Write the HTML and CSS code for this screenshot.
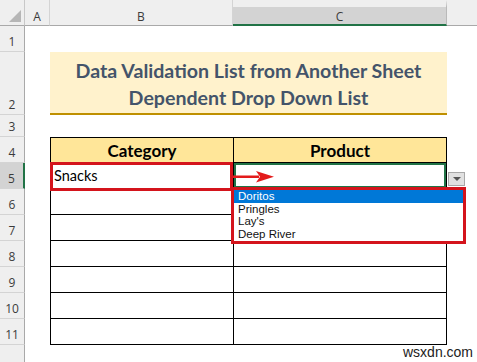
FILE: index.html
```html
<!DOCTYPE html>
<html lang="en">
<head>
    <meta charset="UTF-8">
    <meta name="viewport" content="width=device-width, initial-scale=1.0">
    <title>Dependent Drop Down List</title>
    <link rel="stylesheet" href="styles.css">
</head>
<body>
    <div class="sheet">
        <div class="corner"><span class="tri"></span></div>
        <div class="col-head">A</div>
        <div class="col-head">B</div>
        <div class="col-head sel">C</div>
        <div class="col-head rest"></div>

        <div class="row-head r1">1</div>
        <div class="row-head r2">2</div>
        <div class="row-head r3">3</div>
        <div class="row-head r4">4</div>
        <div class="row-head r5 sel">5</div>
        <div class="row-head r6">6</div>
        <div class="row-head r7">7</div>
        <div class="row-head r8">8</div>
        <div class="row-head r9">9</div>
        <div class="row-head r10">10</div>
        <div class="row-head r11">11</div>
        <div class="row-head r12"></div>

        <div class="title">
            <p>Data Validation List from Another Sheet</p>
            <p>Dependent Drop Down List</p>
        </div>

        <div class="data-table">
            <div class="th">Category</div>
            <div class="th">Product</div>
            <div class="td">Snacks</div>
            <div class="td active"></div>
            <div class="td"></div><div class="td"></div>
            <div class="td"></div><div class="td"></div>
            <div class="td"></div><div class="td"></div>
            <div class="td"></div><div class="td"></div>
            <div class="td"></div><div class="td"></div>
            <div class="td"></div><div class="td"></div>
        </div>

        <!-- annotations over the sheet -->
        <div class="mark-snacks"></div>
        <svg class="arrow" width="42" height="16" viewBox="0 0 42 16">
            <rect x="0" y="6.5" width="26" height="2.5" fill="#e31b1b"/>
            <polygon points="23,2 41,7.7 23,13.5 27,7.7" fill="#e31b1b"/>
        </svg>
        <div class="dd-btn"><span class="caret"></span></div>
        <ul class="dd-list">
            <li class="on">Doritos</li>
            <li>Pringles</li>
            <li>Lay's</li>
            <li>Deep River</li>
        </ul>
        <div class="watermark">wsxdn.com</div>
    </div>
</body>
</html>
```

FILE: styles.css
```css
*{margin: 0;padding: 0;box-sizing: border-box}
ul,li{list-style: none;}
body{background: #fff;font-family: "Open Sans", "Liberation Sans", sans-serif;}
.sheet{position: relative;width: 477px;height: 362px;display: grid;overflow: hidden;
    grid-template-columns: 25px 25px 183px 214px 1fr;
    grid-template-rows: 26px 26px 63px 22px 26px 26px 26px 26px 26px 26px 26px 26px 1fr;}

.corner{grid-column: 1;grid-row: 1;background: #efefef;border-right: 1px solid #c8c8c8;border-bottom: 1px solid #a9a9a9;position: relative;}
.corner .tri{position: absolute;right: 3px;bottom: 3px;width: 0;height: 0;border-left: 12px solid transparent;border-bottom: 12px solid #b6b6b6;}
.col-head{grid-row: 1;background: #efefef;border-bottom: 1px solid #a9a9a9;border-right: 1px solid #d4d4d4;
    display: flex;align-items: center;justify-content: center;padding-top: 7px;font-size: 12px;color: #3b3b3b;}
.col-head.sel{background: #d3d3d3;border-top: 7px solid #efefef;border-right-color: #b9b9b9;border-bottom: 2px solid #217346;padding-top: 1px;color: #3b3b3b;}
.col-head.rest{border-right: none;}

.row-head{grid-column: 1;background: #efefef;border-right: 1px solid #a9a9a9;border-bottom: 1px solid #d4d4d4;
    display: flex;align-items: flex-end;justify-content: center;padding-bottom: 1px;font-size: 12px;color: #3b3b3b;}
.row-head.r1{grid-row: 2}
.row-head.r2{grid-row: 3}
.row-head.r3{grid-row: 4}
.row-head.r4{grid-row: 5}
.row-head.r5{grid-row: 6}
.row-head.r6{grid-row: 7}
.row-head.r7{grid-row: 8}
.row-head.r8{grid-row: 9}
.row-head.r9{grid-row: 10}
.row-head.r10{grid-row: 11}
.row-head.r11{grid-row: 12}
.row-head.r12{grid-row: 13;border-bottom: none}
.row-head.sel{background: #d3d3d3;border-right: 2px solid #217346;}

.title{grid-column: 3 / 5;grid-row: 3;background: #fff2cc;border-bottom: 2px solid #bf9000;
    display: flex;flex-direction: column;align-items: center;justify-content: center;padding-top: 2px;
    font-family: "Lato", "Open Sans", sans-serif;font-weight: 700;font-size: 19.6px;line-height: 27px;color: #44546a;}

.data-table{grid-column: 3 / 5;grid-row: 5 / 13;display: grid;grid-template-columns: 183px 213px;grid-template-rows: 25px repeat(7, 26px);
    border-left: 1px solid #000;border-top: 1px solid #000;}
.data-table .th,.data-table .td{border-right: 1px solid #000;border-bottom: 1px solid #000;}
.th{background: #ffe699;font-family: "Lato", sans-serif;font-weight: 700;font-size: 17px;text-align: center;line-height: 25px;color: #000;}
.td{font-family: "Lato", sans-serif;font-size: 14.5px;line-height: 25px;padding-left: 3px;color: #000;}
.td.active{box-shadow: inset 0 0 0 2px #217346;}

.mark-snacks{position: absolute;left: 50px;top: 162px;width: 183px;height: 29px;border: 3px solid #d4141c;}
.arrow{position: absolute;left: 233px;top: 169px;}
.dd-btn{position: absolute;left: 448px;top: 172px;width: 17px;height: 14px;background: #e1e1e1;border: 1px solid #a8a8a8;}
.dd-btn .caret{position: absolute;left: 4px;top: 4px;border-left: 4px solid transparent;border-right: 4px solid transparent;border-top: 4px solid #555;}
.dd-list{position: absolute;left: 231px;top: 187px;width: 235px;height: 57px;background: #fff;border: 3px solid #d4141c;
    font-family: "Liberation Sans", Arial, sans-serif;font-size: 11.5px;color: #111;}
.dd-list li{height: 12.7px;line-height: 12.7px;padding-left: 4px;}
.dd-list li.on{background: #0078d7;color: #fff;}
.watermark{position: absolute;left: 403px;top: 344px;font-family: "Liberation Sans", Arial, sans-serif;font-size: 14px;color: #222;}
```
